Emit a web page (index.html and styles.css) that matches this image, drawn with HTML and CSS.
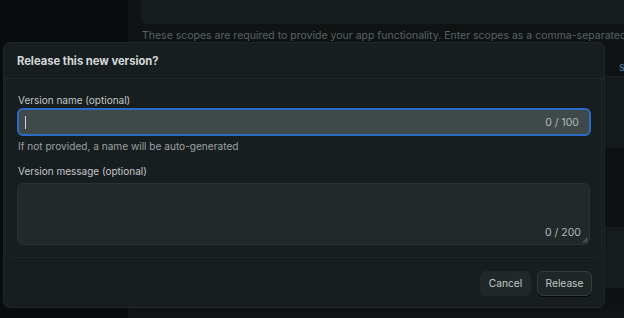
FILE: index.html
```html
<!DOCTYPE html>
<html>
<head>
<meta charset="utf-8">
<link rel="stylesheet" href="styles.css">
</head>
<body>
<div class="app">
  <aside class="sidebar"></aside>
  <main class="main">
    <div class="content">
      <div class="scope-card"></div>
      <p class="scope-help">These scopes are required to provide your app functionality. Enter scopes as a comma-separated list.</p>
      <div class="table">
        <div class="row row-head"><span class="row-link">s</span></div>
        <div class="row row-light"></div>
        <div class="row row-dark"></div>
        <div class="row row-light2"></div>
        <div class="row row-end"></div>
      </div>
    </div>
    <div class="bottom-panel"></div>
  </main>
</div>

<div class="dialog" role="dialog">
  <header class="dialog-header">
    <h2 class="dialog-title">Release this new version?</h2>
  </header>
  <section class="dialog-body">
    <label class="field-label">Version name (optional)</label>
    <div class="input focused">
      <span class="caret"></span>
      <span class="counter">0 / 100</span>
    </div>
    <p class="helper">If not provided, a name will be auto-generated</p>
    <label class="field-label second">Version message (optional)</label>
    <div class="textarea">
      <span class="counter">0 / 200</span>
      <svg class="grip" width="6" height="6" viewBox="0 0 6 6"><path d="M5.5 1 L1 5.5 M5.5 3.5 L3.5 5.5" stroke="#8a9294" stroke-width="0.8" fill="none"/></svg>
    </div>
  </section>
  <footer class="dialog-footer">
    <button class="btn btn-cancel">Cancel</button>
    <button class="btn btn-release">Release</button>
  </footer>
</div>
</body>
</html>
```

FILE: styles.css
```css
* { box-sizing: border-box; }
html, body { margin: 0; padding: 0; }
body {
  width: 624px;
  height: 318px;
  overflow: hidden;
  background: #0b0e0f;
  font-family: Inter, "Noto Sans", sans-serif;
  position: relative;
}
.app { display: flex; height: 318px; }
.sidebar { width: 128px; flex: none; background: #090c0d; }
.main {
  flex: 1;
  background: #0f1314;
  overflow: hidden;
  position: relative;
}
.content { width: 560px; padding-left: 13px; }
.scope-card {
  height: 24px;
  background: #171c1e;
  border-radius: 0 0 0 6px;
}
.scope-help {
  margin: 5px 0 0 1px;
  font-size: 10.5px;
  line-height: 14px;
  color: #5a6264;
  white-space: nowrap;
}
.table { margin-top: 4px; }
.row { height: 20px; }
.row-head { height: 30px; position: relative; background: #0f1314; border-bottom: 1px solid #1a1f21; }
.row-link { position: absolute; left: 478px; top: 13px; font-size: 11px; color: #4f7aa3; }
.row-light { height: 71px; background: #151a1b; }
.row-dark { height: 79px; background: #0d1112; }
.row-light2 { height: 61px; background: #161b1c; }
.row-end { height: 40px; background: #0e1213; }
.bottom-panel {
  position: absolute;
  left: 0; right: 0; top: 311px; height: 20px;
  background: #101415;
  border-radius: 6px 0 0 0;
}

.dialog {
  position: absolute;
  left: 3px;
  top: 42px;
  width: 602px;
  height: 266px;
  background: #181e20;
  border: 1px solid #1f2628;
  border-radius: 7px;
  display: flex;
  flex-direction: column;
}
.dialog-header {
  height: 36px;
  flex: none;
  display: flex;
  align-items: center;
  padding: 0 13px;
  border-bottom: 1px solid #20282a;
}
.dialog-title {
  margin: 0;
  font-size: 11.2px;
  font-weight: 700;
  color: #d5d9da;
}
.dialog-body {
  padding: 14px 12px 12px;
  border: 1px solid #1e2628;
  border-top: none;
  border-radius: 0 0 7px 7px;
  margin: 0 2px 0 1px;
  display: flex;
  flex-direction: column;
}
.field-label {
  font-size: 10px;
  line-height: 14px;
  color: #c2c7c8;
}
.input {
  margin-top: 1px;
  height: 28px;
  border: 2px solid #2b6cc9;
  border-radius: 6px;
  background: #404949;
  display: flex;
  align-items: center;
  padding: 0 10px 0 6px;
  margin-left: -1px;
  margin-right: -2px;
}
.caret { width: 1px; height: 13px; background: #d0d4d4; }
.counter {
  margin-left: auto;
  font-size: 10.5px;
  color: #b3b9ba;
}
.helper {
  margin: 3px 0 0;
  font-size: 10.1px;
  line-height: 14px;
  color: #9aa1a2;
}
.field-label.second { margin-top: 11px; }
.textarea {
  margin-top: 5px;
  height: 62px;
  background: #22292b;
  border: 1px solid #2a3234;
  border-radius: 6px;
  position: relative;
  margin-left: -1px;
  margin-right: -1px;
}
.textarea .counter {
  position: absolute;
  right: 8px;
  bottom: 5px;
}
.grip { position: absolute; right: 1px; bottom: 1px; }
.dialog-footer {
  flex: 1;
  display: flex;
  align-items: center;
  justify-content: flex-end;
  gap: 6px;
  padding: 1px 12px 0;
}
.btn {
  font-family: Inter, "Noto Sans", sans-serif;
  font-size: 10.2px;
  height: 25px;
  border-radius: 6px;
  color: #c4c9ca;
  cursor: pointer;
}
.btn-cancel {
  width: 51px;
  background: #21282a;
  border: none;
}
.btn-release {
  width: 55px;
  background: #1f2628;
  border: 1px solid #353d3f;
  box-shadow: 0 1px 0 #050707;
}
```
